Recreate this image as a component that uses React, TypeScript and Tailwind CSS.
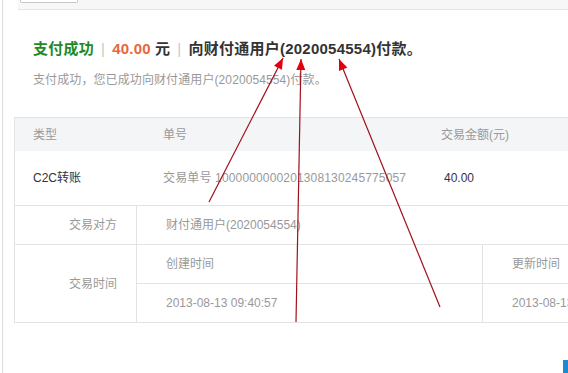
import React from "react"

type Arrow = { sx: number; sy: number; tx: number; ty: number }

const arrows: Arrow[] = [
    { sx: 209, sy: 202, tx: 283, ty: 58 },
    { sx: 296, sy: 322, tx: 301, ty: 59 },
    { sx: 440, sy: 307, tx: 339, ty: 59 },
]

// arrow head triangle, pointing from start to tip
const headPoints = (a: Arrow) => {
    const dx = a.tx - a.sx
    const dy = a.ty - a.sy
    const len = Math.hypot(dx, dy)
    const ux = dx / len
    const uy = dy / len
    const bx = a.tx - ux * 11
    const by = a.ty - uy * 11
    const px = -uy * 4.5
    const py = ux * 4.5
    return `${a.tx},${a.ty} ${bx + px},${by + py} ${bx - px},${by - py}`
}

const Annotations = () => (
    <svg
        className="absolute inset-0 pointer-events-none"
        width={568}
        height={373}
        viewBox="0 0 568 373"
    >
        {arrows.map((a, i) => (
            <g key={i}>
                <line
                    x1={a.sx}
                    y1={a.sy}
                    x2={a.tx}
                    y2={a.ty}
                    stroke="#a0101c"
                    strokeWidth={1.2}
                />
                <polygon points={headPoints(a)} fill="#e2000f" />
            </g>
        ))}
    </svg>
)

export default function App() {
    return (
        <div
            className="relative w-[568px] h-[373px] overflow-hidden bg-white pl-[2px]"
            style={{ fontFamily: '"Liberation Sans", "Noto Sans CJK SC", sans-serif' }}
        >
            <div className="h-full border-l border-[#dddddd]">
                {/* top strip */}
                <div className="ml-[15px] h-[10px] border-b border-[#e6e6e6] bg-[#f7f7f7]">
                    <div className="ml-[2px] w-[58px] h-[3px] border border-t-0 border-[#c8c8c8] rounded-b-[2px] bg-white" />
                </div>

                {/* headline */}
                <div className="ml-[30px] mt-[29px] flex items-center h-[20px] text-[15px] font-bold leading-[20px] tracking-[0.25px] text-[#333333]">
                    <span className="text-[#1f8a1f]">支付成功</span>
                    <span className="mx-[7px] font-normal text-[#c8c8c8]">|</span>
                    <span className="text-[#e8673a]">40.00</span>
                    <span className="ml-[4px]">元</span>
                    <span className="mx-[7px] font-normal text-[#c8c8c8]">|</span>
                    <span>向财付通用户(2020054554)付款。</span>
                </div>

                <div className="ml-[30px] mt-[12px] h-[18px] text-[12px] leading-[18px] tracking-[0.1px] text-[#999999]">
                    支付成功，您已成功向财付通用户(2020054554)付款。
                </div>

                {/* table */}
                <div className="ml-[11px] mt-[28px] w-[640px] text-[12px] leading-[18px]">
                    <div className="flex items-center h-[34px] border-t border-x border-[#e3e3e3] bg-[#f4f5f7] text-[#999999]">
                        <div className="w-[148px] pl-[18px]">类型</div>
                        <div className="w-[278px]">单号</div>
                        <div>交易金额(元)</div>
                    </div>
                    <div className="flex items-center h-[55px] border-x border-b border-[#e3e3e3]">
                        <div className="w-[148px] pl-[18px] text-[#333333]">C2C转账</div>
                        <div className="w-[278px] text-[#999999] tracking-[0.15px]">
                            交易单号 1000000000201308130245775057
                        </div>
                        <div className="pl-[3px] text-[#3a2f45]">40.00</div>
                    </div>
                    <div className="flex h-[39px] border-x border-b border-[#e3e3e3]">
                        <div className="w-[122px] border-r border-[#e3e3e3] flex items-center justify-end pr-[19px] text-[#999999]">
                            交易对方
                        </div>
                        <div className="flex items-center pl-[29px] text-[#999999]">
                            财付通用户(2020054554)
                        </div>
                    </div>
                    <div className="flex h-[78px] border-x border-b border-[#e3e3e3] text-[#999999]">
                        <div className="w-[122px] border-r border-[#e3e3e3] flex items-center justify-end pr-[19px]">
                            交易时间
                        </div>
                        <div className="flex-1 flex flex-col">
                            <div className="flex h-[39px] border-b border-[#e3e3e3]">
                                <div className="w-[346px] border-r border-[#e3e3e3] flex items-center pl-[29px]">
                                    创建时间
                                </div>
                                <div className="flex items-center pl-[29px]">更新时间</div>
                            </div>
                            <div className="flex flex-1">
                                <div className="w-[346px] border-r border-[#e3e3e3] flex items-center pl-[29px]">
                                    2013-08-13 09:40:57
                                </div>
                                <div className="flex items-center pl-[29px]">2013-08-13 09:40:57</div>
                            </div>
                        </div>
                    </div>
                </div>

                <div className="ml-[560px] mt-[37px] w-[20px] h-[14px] bg-[#1a8bd2]" />
            </div>

            <Annotations />
        </div>
    )
}
